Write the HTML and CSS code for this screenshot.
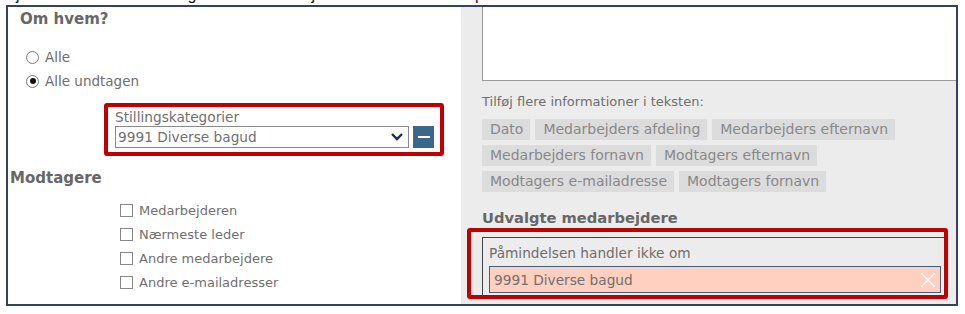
FILE: index.html
```html
<!DOCTYPE html>
<html lang="da">
<head>
    <meta charset="UTF-8">
    <title>Påmindelse - modtagere</title>
    <link rel="stylesheet" href="styles.css">
</head>
<body>
    <div class="doc-line">
        <div class="doc-text"><span class="d1">j</span><span class="d2">g</span><span class="d3">j</span><span class="d4">p</span></div>
    </div>
    <div class="frame">
        <div class="left">
            <h3 class="title">Om hvem?</h3>
            <div class="radios">
                <label class="radio"><span class="dot"></span>Alle</label>
                <label class="radio"><span class="dot checked"></span>Alle undtagen</label>
            </div>
            <div class="mark mark-select">
                <div class="field-label">Stillingskategorier</div>
                <div class="select-row">
                    <div class="select">
                        <span>9991 Diverse bagud</span>
                        <svg class="chev" width="14" height="10" viewBox="0 0 14 10"><polyline points="2,2 7,7 12,2" fill="none" stroke="#1d2a44" stroke-width="2.4"/></svg>
                    </div>
                    <button class="minus"><span></span></button>
                </div>
            </div>
            <h3 class="title title-flush">Modtagere</h3>
            <div class="checks">
                <label class="check"><span class="box"></span>Medarbejderen</label>
                <label class="check"><span class="box"></span>Nærmeste leder</label>
                <label class="check"><span class="box"></span>Andre medarbejdere</label>
                <label class="check"><span class="box"></span>Andre e-mailadresser</label>
            </div>
        </div>
        <div class="right">
            <div class="textarea"></div>
            <p class="hint">Tilføj flere informationer i teksten:</p>
            <div class="tags">
                <span class="tag">Dato</span>
                <span class="tag">Medarbejders afdeling</span>
                <span class="tag">Medarbejders efternavn</span>
                <span class="tag">Medarbejders fornavn</span>
                <span class="tag">Modtagers efternavn</span>
                <span class="tag">Modtagers e-mailadresse</span>
                <span class="tag">Modtagers fornavn</span>
            </div>
            <h3 class="title title-right">Udvalgte medarbejdere</h3>
            <div class="mark mark-selected">
                <div class="selected-box">
                    <div class="selected-label">Påmindelsen handler ikke om</div>
                    <div class="chip">
                        <span>9991 Diverse bagud</span>
                        <svg class="close" width="16" height="16" viewBox="0 0 16 16"><path d="M1 1 L15 15 M15 1 L1 15" stroke="#fff" stroke-width="1.4"/></svg>
                    </div>
                </div>
            </div>
        </div>
    </div>
</body>
</html>
```

FILE: styles.css
```css
body {
    margin: 0;
    background-color: #fff;
    font-family: "DejaVu Sans", Verdana, sans-serif;
    color: #6e6e6e;
}
.doc-line {
    height: 5px;
    overflow: hidden;
}
.doc-text {
    margin-top: -13px;
    font-family: "Liberation Sans", Arial, sans-serif;
    font-size: 16px;
    line-height: 16px;
    color: #111;
    display: flex;
}
.d1 { margin-left: 16px; }
.d2 { margin-left: 168px; }
.d3 { margin-left: 115px; }
.d4 { margin-left: 160px; }

.frame {
    margin-left: 6px;
    width: 948px;
    height: 297px;
    border: 2px solid #34425c;
    display: flex;
    overflow: hidden;
}
.left {
    width: 453px;
    background-color: #fff;
    padding-left: 2px;
    box-sizing: border-box;
}
.right {
    flex: 1;
    background-color: #ececec;
    padding-left: 21px;
    padding-right: 8px;
}

.title {
    margin: 0;
    font-size: 15px;
    font-weight: bold;
    color: #676767;
    line-height: 20px;
}
.left > .title:first-child {
    margin-left: 10px;
    margin-top: 2px;
}
.title-flush {
    margin-top: 12px;
}

.radios {
    margin-top: 16px;
    margin-left: 16px;
}
.radio {
    display: flex;
    align-items: center;
    height: 24px;
    font-size: 13.5px;
}
.dot {
    width: 11px;
    height: 11px;
    border: 1px solid #777;
    border-radius: 50%;
    margin-right: 6px;
    background-color: #fff;
    display: flex;
    align-items: center;
    justify-content: center;
}
.dot.checked::after {
    content: "";
    width: 6px;
    height: 6px;
    border-radius: 50%;
    background-color: #111;
}

.mark {
    border: 4px solid #c00000;
    border-radius: 3px;
}
.mark-select {
    margin: 10px 0 0 94px;
    width: 319px;
    padding: 2px 6px 4px 7px;
}
.field-label {
    font-size: 13.7px;
    line-height: 17px;
    color: #707070;
}
.select-row {
    display: flex;
    gap: 4px;
}
.select {
    width: 294px;
    height: 22px;
    box-sizing: border-box;
    border: 1px solid #8a8a8a;
    display: flex;
    align-items: center;
    justify-content: space-between;
    padding: 0 4px 0 2px;
    font-size: 13.7px;
    color: #707070;
    background-color: #fff;
}
.minus {
    width: 21px;
    height: 22px;
    border: none;
    padding: 0;
    background-color: #3b6889;
    display: flex;
    align-items: center;
    justify-content: center;
}
.minus span {
    width: 12px;
    height: 2px;
    background-color: #fff;
}

.checks {
    margin: 10px 0 0 110px;
}
.check {
    display: flex;
    align-items: center;
    height: 24px;
    font-size: 13px;
    color: #707070;
}
.box {
    width: 11px;
    height: 11px;
    border: 1px solid #888;
    margin-right: 6px;
    background-color: #fff;
}

.textarea {
    height: 73px;
    background-color: #fff;
    border-left: 1px solid #9a9a9a;
    border-bottom: 1px solid #9a9a9a;
    margin-right: -8px;
}
.hint {
    margin: 12px 0 0;
    font-size: 13px;
    line-height: 18px;
    color: #6e6e6e;
}
.tags {
    margin-top: 8px;
    display: flex;
    flex-wrap: wrap;
    gap: 5px;
    width: 430px;
}
.tag {
    height: 21px;
    line-height: 21px;
    padding: 0 7px 0 8px;
    background-color: #dcdcdc;
    color: #888;
    font-size: 14px;
}
.title-right {
    margin-top: 16px;
    font-size: 14.7px;
}
.mark-selected {
    margin: 0 0 0 -15px;
    padding: 5px 0 0 11px;
    height: 58px;
}
.selected-box {
    border-top: 1px solid #444;
    border-left: 1px solid #444;
    height: 100%;
    box-sizing: border-box;
    padding: 6px 3px 0 6px;
}
.selected-label {
    font-size: 13.7px;
    line-height: 18px;
    color: #6e6e6e;
}
.chip {
    margin-top: 4px;
    height: 27px;
    box-sizing: border-box;
    border: 1px solid #3f5f7c;
    background-color: #ffcfbf;
    display: flex;
    align-items: center;
    justify-content: space-between;
    padding: 0 3px 0 4px;
    font-size: 13.7px;
    color: #707070;
}
.close {
    margin-right: 1px;
}
```
